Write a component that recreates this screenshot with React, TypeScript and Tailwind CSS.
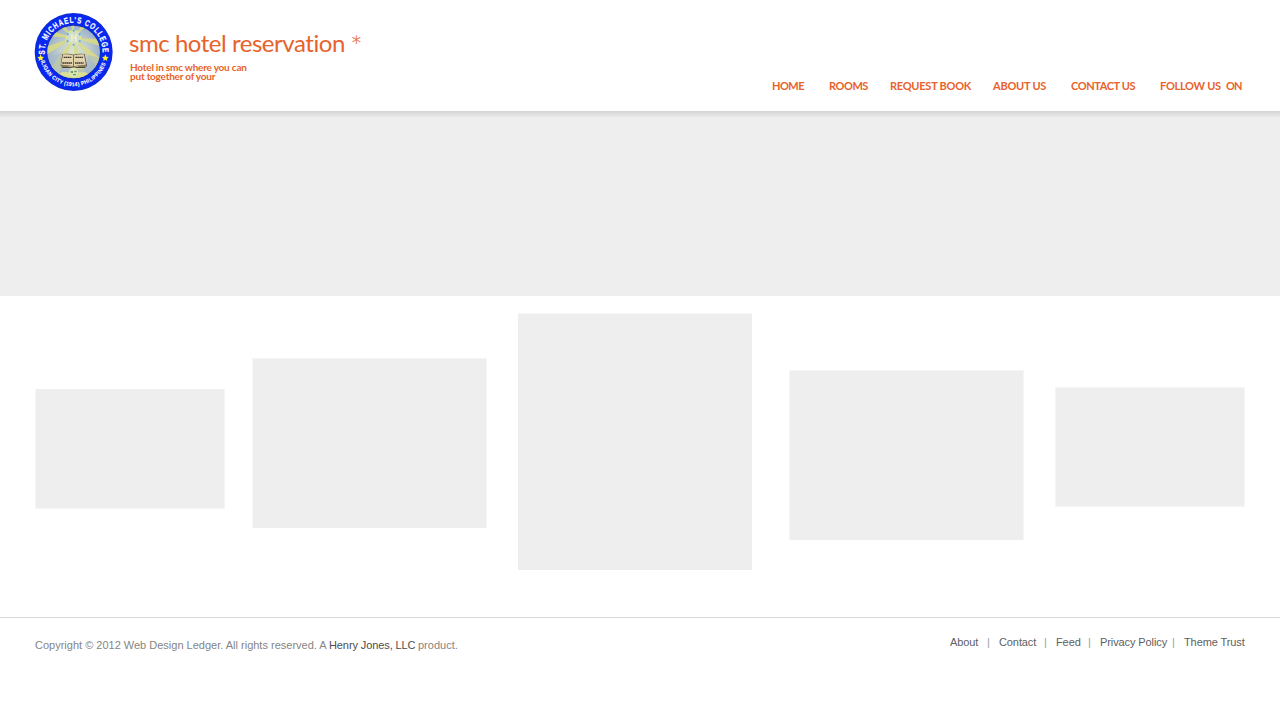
const nav = [
  { label: "HOME", cls: "ml-[772px] w-[57px] tracking-[-0.5px]" },
  { label: "ROOMS", cls: "w-[61px] tracking-[-0.45px]" },
  { label: "REQUEST BOOK", cls: "w-[103px] tracking-[-0.25px]" },
  { label: "ABOUT US", cls: "w-[78px] tracking-[-0.25px]" },
  { label: "CONTACT US", cls: "w-[89px] tracking-[-0.4px]" },
  { label: "FOLLOW US", cls: "w-[66px] tracking-[-0.27px]" },
  { label: "ON", cls: "tracking-[-0.8px]" },
];

const panels = [
  "mt-[93px] ml-[35px] h-[120px] w-[190px] border-x border-b",
  "mt-[62px] ml-[27px] h-[170px] w-[235px] border-x border-t",
  "mt-[17px] ml-[31px] h-[257px] w-[234px] border-t",
  "mt-[74px] ml-[37px] h-[170px] w-[235px] border-x border-t",
  "mt-[91px] ml-[31px] h-[120px] w-[190px] border",
];

const rays = [10, 45, 80, 120, 155, 190, 225, 265, 310];
const stars = [0, 30, 60, 90, 120, 150, 180, 210, 240, 270, 300, 330];

function Seal() {
  return (
    <svg viewBox="0 0 300 285" className="h-[95px] w-[100px] shrink-0" fontFamily='"Liberation Sans", sans-serif'>
      <defs>
        <radialGradient id="sky">
          <stop offset="0" stopColor="#dce7c9" />
          <stop offset="0.55" stopColor="#c0cecd" />
          <stop offset="1" stopColor="#9cb0cb" />
        </radialGradient>
        <clipPath id="disc"><circle cx="146" cy="141" r="79" /></clipPath>
        <path id="upper" d="M59.3 148 A87 87 0 1 1 232.7 148" />
        <path id="lower" d="M47.5 168 A102 102 0 0 0 244.5 168" />
      </defs>
      <circle cx="146" cy="141" r="117" fill="#102bd0" />
      <circle cx="146" cy="141" r="114" fill="#0828f2" />
      <circle cx="146" cy="141" r="81" fill="#183091" />
      <circle cx="146" cy="141" r="79" fill="url(#sky)" />
      <g clipPath="url(#disc)">
        {rays.map((a) => (
          <path key={a} d="M146 98 L270 82 L270 114Z" fill="#dadb82" opacity="0.85" transform={`rotate(${a} 146 98)`} />
        ))}
        <path d="M72 155 L110 143 L110 192 L187 192 L187 149 L222 158 L200 225 H88Z" fill="#a9bbc6" opacity="0.6" />
        <path d="M110 202 L85 218 H205 L182 202Z" fill="#dadf91" />
      </g>
      <circle cx="146" cy="98" r="23" fill="#cfddcd" />
      {stars.map((a) => (
        <circle key={a} cx="146" cy="77" r="3" fill={a % 60 ? "#e8ea60" : "#58a9df"} transform={`rotate(${a} 146 98)`} />
      ))}
      <path d="M137 87h7v7h6v-7h6v23h-7v-9h-6v9h-6z" fill="#fffbd0" opacity="0.5" />
      <path d="M107 180 L112 147 Q133 144 146 149 Q161 144 179 147 L186 182 L180 189 H112Z" fill="#494235" />
      <path d="M108 179 L114 148 Q133 146 145 151 V184 Q128 179 108 179Z M147 151 Q161 146 177 148 L183 179 Q162 179 147 184Z" fill="#e4d4ac" />
      <path d="M109 183 Q130 181 146 187 Q160 181 184 183" fill="none" stroke="#c9b587" strokeWidth="3" />
      <g fill="none" stroke="#3e3830" strokeWidth="4" strokeDasharray="5 1">
        <path d="M116 157 H139 M151 157 H174 M112 174 H142 M150 174 H176" />
      </g>
      <circle cx="146" cy="202" r="14" fill="#d8e6b8" />
      <path d="M137 198 h7 v6 h-6z M148 197 h7 v5h-7z M144 207h9v4h-9z" fill="#6d9665" />
      <g fill="#fff" fontWeight="bold">
        <text fontSize="26" stroke="#fff" strokeWidth="0.6" letterSpacing="3.5" textLength="284" lengthAdjust="spacingAndGlyphs"><textPath href="#upper">ST. MICHAEL'S COLLEGE</textPath></text>
        <text fontSize="16.5" stroke="#fff" strokeWidth="0.3" letterSpacing="1" textLength="260" lengthAdjust="spacingAndGlyphs"><textPath href="#lower">ILIGAN CITY (1914) PHILIPPINES</textPath></text>
      </g>
      {[[47, 158], [241, 158]].map(([x, y]) => (
        <path key={x} transform={`translate(${x} ${y})`} d="M0-10 3-3 10-2 5 3 6 10 0 6-6 10-5 3-10-2-3-3Z" fill="#fff229" />
      ))}
    </svg>
  );
}

export default function App() {
  return (
    <div className="flex h-[720px] w-[1280px] flex-col overflow-hidden bg-white font-['Liberation_Sans',Arial,sans-serif]">
      <header className="flex h-[111px] shrink-0 flex-col font-[Lato,sans-serif] text-[#e8622b]">
        <div className="flex h-[76px] pt-[5px] pl-[25px]">
          <Seal />
          <div className="pl-[4px] pt-[23px] whitespace-nowrap">
            <div className="flex h-[30px] items-start">
              <h1 className="w-[221px] text-[24px] leading-[30px] tracking-[-0.46px]">smc hotel reservation</h1>
              <span className="text-[30px] leading-[34px] font-light">*</span>
            </div>
            <p className="mt-[5px] ml-px text-[10px] leading-[9px] font-bold tracking-[-0.21px]">
              <span className="block">Hotel in smc where you can</span>
              <span className="block">put together of your</span>
            </p>
          </div>
        </div>
        <nav className="flex h-[20px] items-center text-[11px] font-bold whitespace-nowrap">
          {nav.map((n) => <a key={n.label} className={`block shrink-0 ${n.cls}`}>{n.label}</a>)}
        </nav>
      </header>
      <section className="h-[185px] shrink-0 bg-[#eeeeee]">
        <div className="h-[7px] bg-linear-to-b from-[#d3d3d3] to-[#eeeeee]" />
      </section>
      <main className="flex h-[321px] shrink-0 items-start">
        {panels.map((p) => <div key={p} className={`shrink-0 border-[#f6f6f6] bg-[#eeeeee] ${p}`} />)}
      </main>
      <footer className="flex h-[103px] shrink-0 border-t border-[#d9d9d9] text-[11px] leading-[14px] whitespace-nowrap text-[#858585]">
        <p className="mt-[20px] ml-[35px] flex w-[915px]">
          <span className="w-[294px]">Copyright © 2012 Web Design Ledger. All rights reserved. A</span>
          <span className="w-[89px] tracking-[-0.1px] text-[#4d4d4d]">Henry Jones, LLC</span>
          <span>product.</span>
        </p>
        <div className="mt-[17px] flex tracking-[-0.1px] text-[#606060]">
          <a className="w-[37px]">About</a><span className="w-[12px] text-[#9a9ba5]">|</span>
          <a className="w-[45px]">Contact</a><span className="w-[12px] text-[#9a9ba5]">|</span>
          <a className="w-[32px]">Feed</a><span className="w-[12px] text-[#9a9ba5]">|</span>
          <a className="w-[72px]">Privacy Policy</a><span className="w-[12px] text-[#9a9ba5]">|</span>
          <a>Theme Trust</a>
        </div>
      </footer>
    </div>
  );
}
